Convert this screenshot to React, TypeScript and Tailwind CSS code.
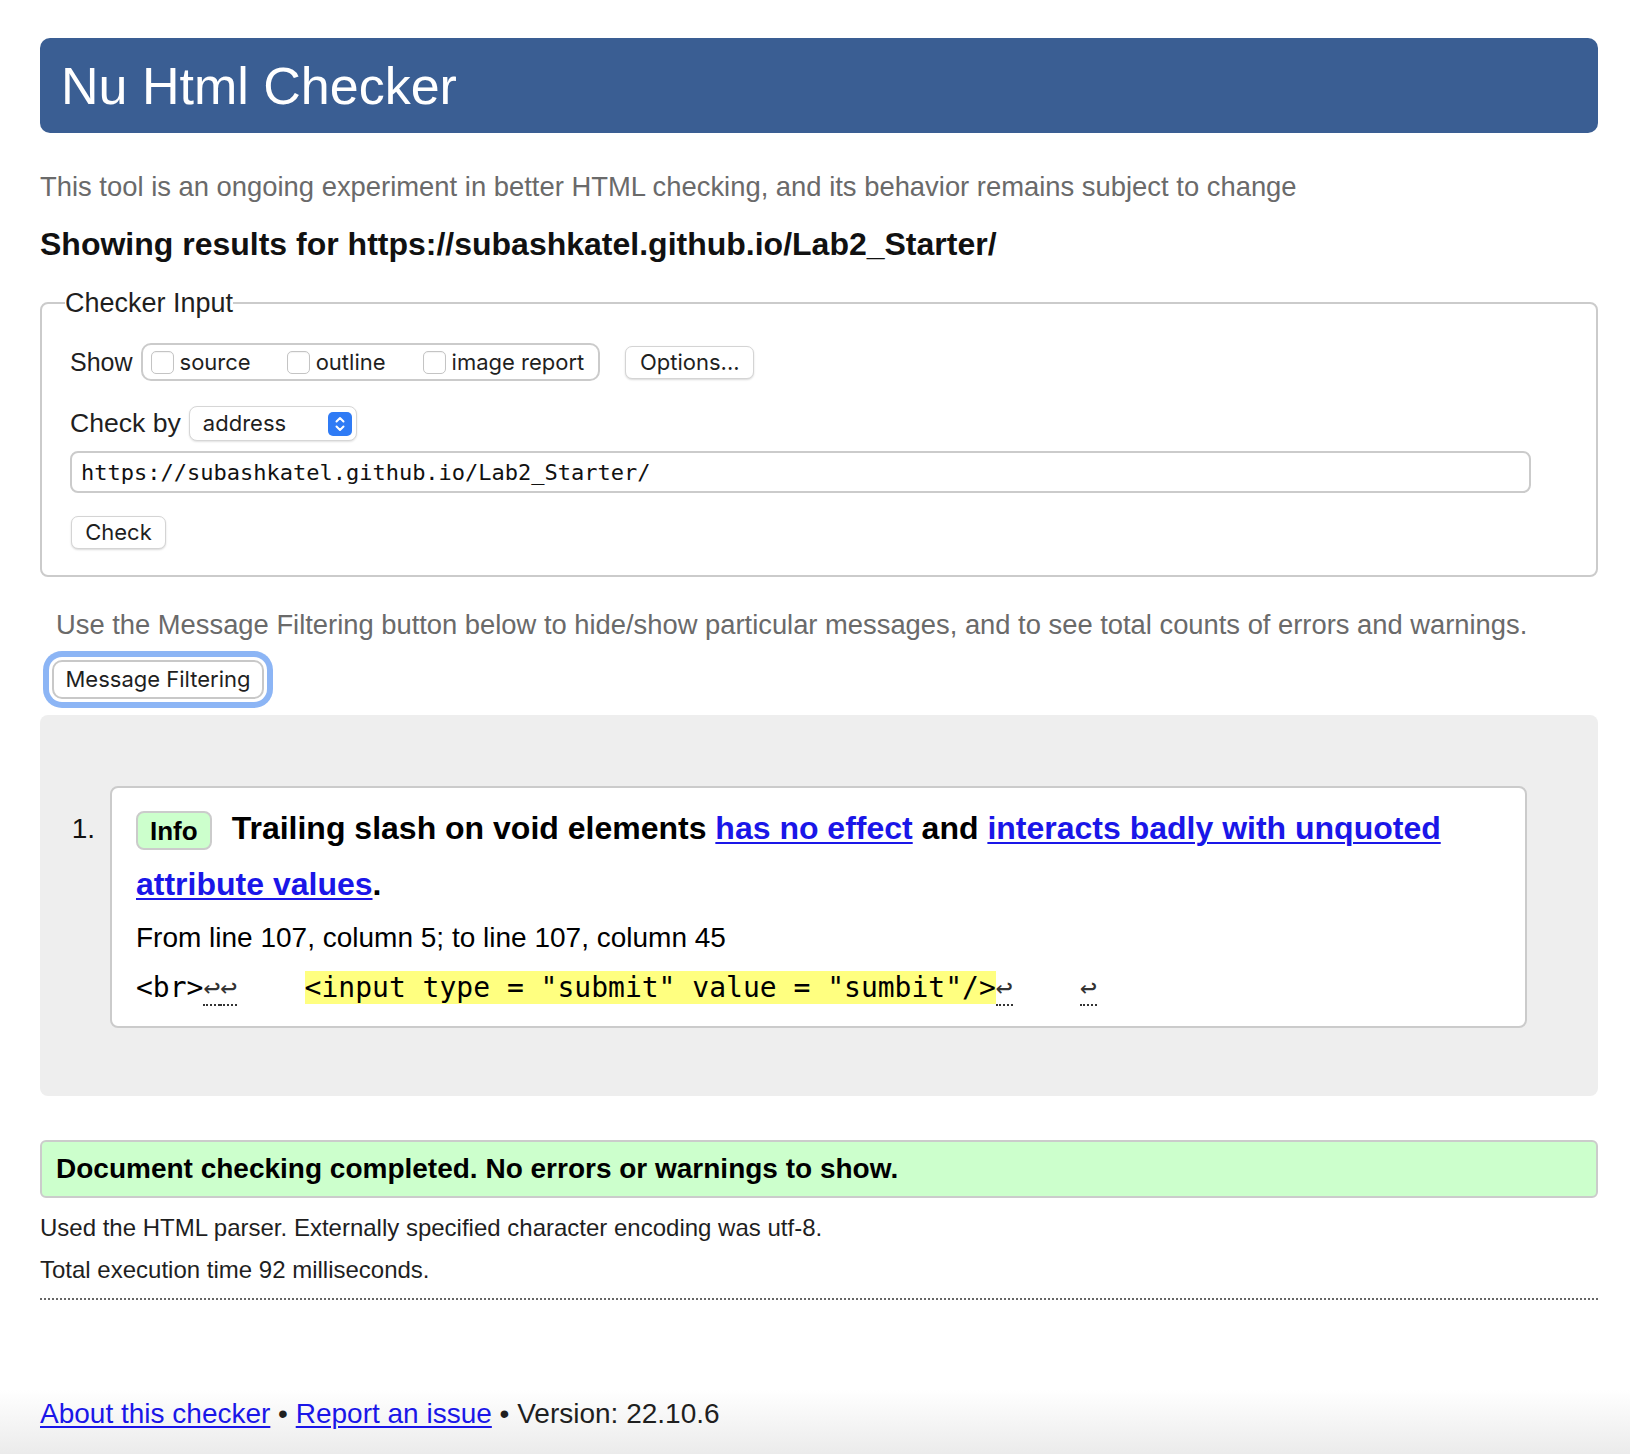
import React from "react";

const ctrl = "font-['Inter','Noto_Sans',sans-serif] text-[22px] text-[#1f1f1f]";

function Box({ label, gap }: { label: string; gap: string }) {
  return (
    <div className={`flex items-center ${gap}`}>
      <span className="w-[23px] h-[23px] rounded-[5px] border border-[#c4c4c4] bg-white shadow-[inset_0_1px_1px_rgba(0,0,0,0.05)]" />
      <span className={`ml-[6px] ${ctrl} leading-none`}>{label}</span>
    </div>
  );
}

function Lf() {
  return (
    <span className="text-[#333] border-b-2 border-dotted border-[#333]">↩</span>
  );
}

export default function App() {
  return (
    <div className="relative min-h-[1454px] bg-white font-['Liberation_Sans',Arial,sans-serif] text-[#1f1f1f] overflow-hidden">
      <div className="pointer-events-none absolute left-0 right-0 bottom-0 h-[64px] bg-gradient-to-b from-[#ffffff] to-[#ebebeb]" />
      <div className="relative ml-[40px] w-[1558px] pt-[38px]">
        <header className="h-[95px] rounded-[10px] bg-[#3a5e93] flex items-center pl-[21px]">
          <h1 className="text-[52px] leading-none text-white">Nu Html Checker</h1>
        </header>

        <p className="mt-[38px] text-[27.4px] leading-[32px] text-[#6a6a6a]">
          This tool is an ongoing experiment in better HTML checking, and its behavior remains subject to change
        </p>
        <p className="mt-[22px] text-[32px] leading-[38px] font-bold text-[#111]">
          Showing results for https://subashkatel.github.io/Lab2_Starter/
        </p>

        <fieldset className="mt-[25px] border-2 border-[#cbcbcb] rounded-[8px] pl-[28px] pb-[26px] min-w-0">
          <legend className="ml-[-5px] text-[27px] leading-[30px] text-[#1f1f1f]">Checker Input</legend>

          <div className="mt-[25px] h-[38px] flex items-center">
            <span className="text-[25px] leading-none">Show</span>
            <div className="ml-[8px] h-[38px] border-2 border-[#cbcbcb] rounded-[10px] flex items-center pl-[8px] pr-[14px]">
              <Box label="source" gap="mr-[36px]" />
              <Box label="outline" gap="mr-[37px]" />
              <Box label="image report" gap="" />
            </div>
            <div className={`ml-[25px] h-[33px] w-[129px] rounded-[7px] border border-[#d4d4d4] bg-white shadow-[0_1px_2px_rgba(0,0,0,0.15)] flex items-center justify-center ${ctrl}`}>
              Options...
            </div>
          </div>

          <div className="mt-[25px] h-[35px] flex items-center">
            <span className="text-[26.6px] leading-none">Check by</span>
            <div className="ml-[8px] w-[168px] h-[35px] rounded-[8px] border border-[#d6d6d6] bg-white shadow-[0_1px_2px_rgba(0,0,0,0.12)] flex items-center justify-between pl-[13px] pr-[4px]">
              <span className={ctrl}>address</span>
              <svg width="24" height="24" viewBox="0 0 24 24">
                <rect x="0" y="0" width="24" height="24" rx="5" fill="#2f7bf5" />
                <path d="M8.5 9.5 L12 6 L15.5 9.5" stroke="white" strokeWidth="2" fill="none" strokeLinecap="round" strokeLinejoin="round" />
                <path d="M8.5 14.5 L12 18 L15.5 14.5" stroke="white" strokeWidth="2" fill="none" strokeLinecap="round" strokeLinejoin="round" />
              </svg>
            </div>
          </div>

          <div className="mt-[10px] w-[1461px] h-[42px] border-2 border-[#cbcbcb] rounded-[8px] flex items-center pl-[9px] font-['DejaVu_Sans_Mono',monospace] text-[22px] text-[#111]">
            https://subashkatel.github.io/Lab2_Starter/
          </div>

          <div className={`mt-[23px] ml-[1px] w-[95px] h-[33px] rounded-[7px] border border-[#d4d4d4] bg-white shadow-[0_1px_2px_rgba(0,0,0,0.15)] flex items-center justify-center ${ctrl}`}>
            Check
          </div>
        </fieldset>

        <p className="mt-[32px] ml-[16px] text-[27.35px] leading-[31px] text-[#6a6a6a]">
          Use the Message Filtering button below to hide/show particular messages, and to see total counts of errors and warnings.
        </p>

        <div className={`mt-[20px] ml-[12px] w-[212px] h-[39px] rounded-[10px] border-2 border-[#c8c8c8] bg-white shadow-[0_0_0_3px_#ffffff,0_0_0_9px_#8cb5f5] flex items-center justify-center ${ctrl}`}>
          Message Filtering
        </div>

        <div className="mt-[16px] bg-[#eeeeee] rounded-[8px] pt-[71px] pb-[68px] pl-[31px] pr-[71px] flex">
          <div className="w-[39px] pr-[15px] text-right pt-[15px] text-[28px] leading-[56px] text-[#111]">1.</div>
          <div className="flex-1 bg-white border-2 border-[#cbcbcb] rounded-[8px] pt-[12px] pb-[18px] pl-[24px] pr-[24px]">
            <p className="text-[32px] leading-[56px] font-bold text-black">
              <span className="inline-flex align-middle h-[39px] px-[12px] items-center bg-[#ccffcc] border-2 border-[#cbcbcb] rounded-[8px] text-[26px] leading-none mr-[20px]">
                Info
              </span>
              Trailing slash on void elements{" "}
              <a className="text-[#1a16e8] underline decoration-2 underline-offset-[3px]">has no effect</a> and{" "}
              <a className="text-[#1a16e8] underline decoration-2 underline-offset-[3px]">interacts badly with unquoted attribute values</a>.
            </p>
            <p className="mt-[6px] text-[28px] leading-[40px] text-black">
              From line 107, column 5; to line 107, column 45
            </p>
            <p className="mt-[10px] text-[28px] leading-[40px] text-black font-['DejaVu_Sans_Mono',monospace] whitespace-pre">
              {"<br>"}
              <Lf />
              <Lf />
              {"    "}
              <mark className="bg-[#ffff80] text-black">{'<input type = "submit" value = "sumbit"/>'}</mark>
              <Lf />
              {"    "}
              <Lf />
            </p>
          </div>
        </div>

        <div className="mt-[44px] h-[58px] bg-[#ccffcc] border-2 border-[#cbcbcb] rounded-[6px] flex items-center pl-[14px] text-[28px] font-bold text-black">
          Document checking completed. No errors or warnings to show.
        </div>

        <p className="mt-[9px] text-[24px] leading-[42px]">
          Used the HTML parser. Externally specified character encoding was utf-8.
        </p>
        <p className="text-[24px] leading-[42px]">Total execution time 92 milliseconds.</p>

        <div className="mt-[7px] border-t-2 border-dotted border-[#666]" />

        <p className="mt-[94px] text-[28px] leading-[40px] text-[#1f1f1f]">
          <a className="text-[#1a16e8] underline decoration-2 underline-offset-[3px]">About this checker</a>
          {" • "}
          <a className="text-[#1a16e8] underline decoration-2 underline-offset-[3px]">Report an issue</a>
          {" • Version: 22.10.6"}
        </p>
      </div>
    </div>
  );
}
